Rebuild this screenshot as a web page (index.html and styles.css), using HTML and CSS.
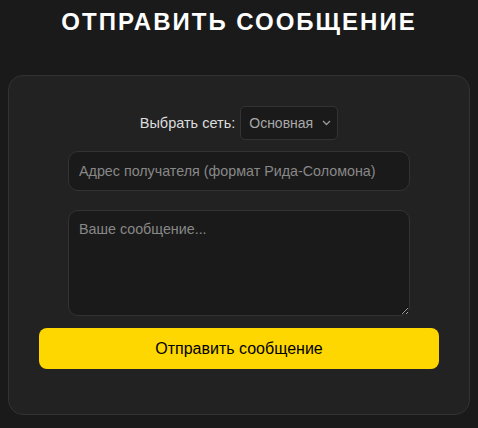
FILE: index.html
```html
<!DOCTYPE html>
<html lang="ru">
<head>
    <meta charset="UTF-8">
    <meta name="viewport" content="width=device-width, initial-scale=1.0">
    <title>Отправить сообщение</title>
    <link rel="stylesheet" href="styles.css">
</head>
<body>
    <h1>Отправить сообщение</h1>
    <div class="card">
        <div class="net-row">
            <label for="network">Выбрать сеть:</label>
            <select id="network">
                <option>Основная</option>
                <option>Тестовая</option>
            </select>
        </div>
        <input type="text" id="address" placeholder="Адрес получателя (формат Рида-Соломона)">
        <textarea id="message" placeholder="Ваше сообщение..."></textarea>
        <button>Отправить сообщение</button>
    </div>
</body>
</html>
```

FILE: styles.css
```css
body {
    font-family: "Liberation Sans", Arial, sans-serif;
    margin: 0;
    padding: 8px;
    background-color: #1a1a1a;
    color: white;
}
h1 {
    margin: 0;
    height: 67px;
    font-size: 24px;
    line-height: 28px;
    letter-spacing: 2px;
    text-transform: uppercase;
    text-align: center;
}
.card {
    background: #222;
    border: 1px solid #333;
    border-radius: 15px;
    padding: 30px 30px 45px;
    display: flex;
    flex-direction: column;
    align-items: center;
}
.net-row {
    display: flex;
    align-items: center;
    gap: 5px;
    height: 34px;
}
label {
    font-size: 14.5px;
    color: #ddd;
}
select {
    appearance: none;
    width: 98px;
    height: 34px;
    padding: 0 8px;
    font-family: inherit;
    font-size: 14px;
    color: #a8a8a8;
    background: #1a1a1a url("data:image/svg+xml,%3Csvg xmlns='http://www.w3.org/2000/svg' width='9' height='6' viewBox='0 0 9 6'%3E%3Cpath d='M1 1l3.5 3.5 3.5-3.5' fill='none' stroke='%23999' stroke-width='1.3'/%3E%3C/svg%3E") no-repeat right 6px center;
    border: 1px solid #333;
    border-radius: 5px;
}
input, textarea {
    width: 80%;
    padding: 10px;
    font-family: inherit;
    font-size: 14.3px;
    color: #ddd;
    background: #1a1a1a;
    border: 1px solid #333;
    border-radius: 10px;
}
input {
    height: 18px;
    margin-top: 11px;
}
textarea {
    height: 84px;
    margin-top: 19px;
    resize: vertical;
}
input::placeholder, textarea::placeholder {
    color: #888;
}
button {
    width: 100%;
    height: 41px;
    margin-top: 12px;
    font-family: inherit;
    font-size: 16px;
    color: #000;
    background: #ffd700;
    border: none;
    border-radius: 8px;
    cursor: pointer;
}
```
